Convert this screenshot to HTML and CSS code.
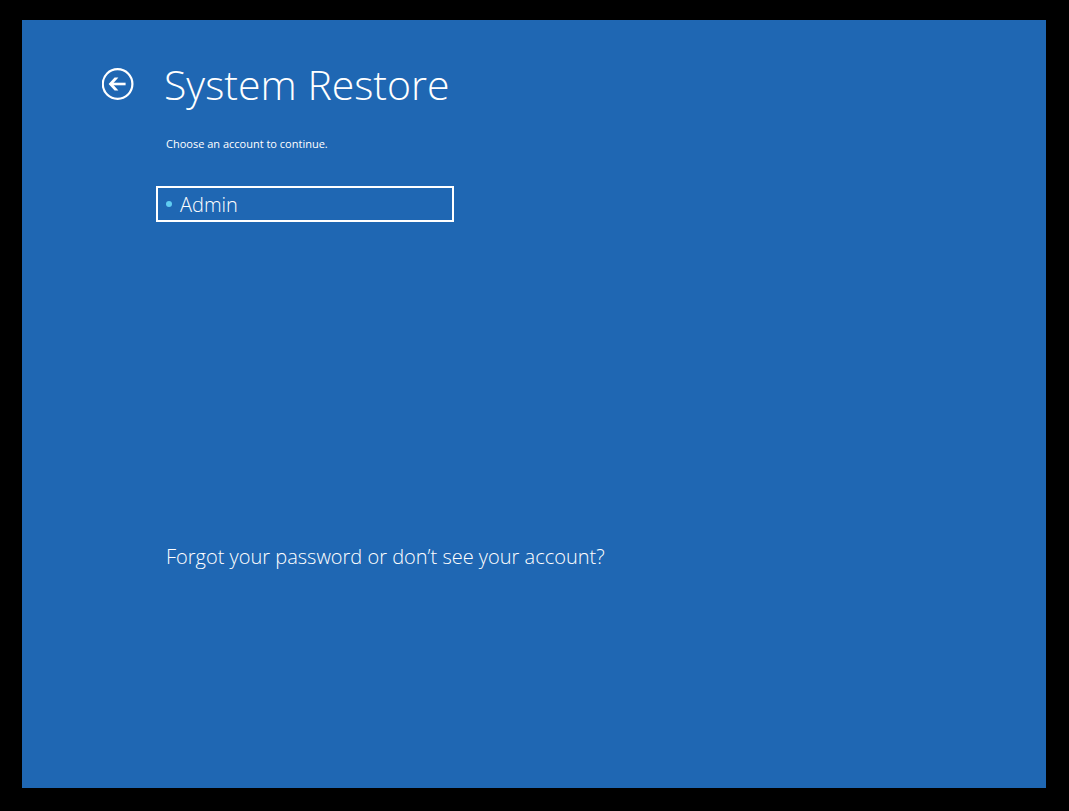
FILE: index.html
```html
<!DOCTYPE html>
<html lang="en">
<head>
    <meta charset="UTF-8">
    <meta name="viewport" content="width=device-width, initial-scale=1.0">
    <title>System Restore</title>
    <link rel="stylesheet" href="styles.css">
</head>
<body>
    <main id="screen">
        <header class="heading">
            <button type="button" class="back" aria-label="Back">
                <svg width="32" height="32" viewBox="0 0 32 32" fill="none" stroke="#fff">
                    <circle cx="15.6" cy="16" r="14.8" stroke-width="2.2"/>
                    <path d="M8.5 16H23.6" stroke-width="2.6"/>
                    <path d="M12.6 9.6H16.4L10.6 16L16.4 22.4H12.6L6.6 16Z" fill="#fff" stroke="none"/>
                </svg>
            </button>
            <h1>System Restore</h1>
        </header>
        <div class="content">
            <p class="hint">Choose an account to continue.</p>
            <div class="accounts">
                <button type="button" class="account"><span class="dot"></span>Admin</button>
            </div>
            <a href="#" class="forgot">Forgot your password or don’t see your account?</a>
        </div>
    </main>
</body>
</html>
```

FILE: styles.css
```css
* {
    margin: 0;
    padding: 0;
    box-sizing: border-box;
}

body {
    min-height: 100vh;
    display: flex;
    padding: 20px 23px 23px 22px;
    background-color: #000;
    color: #fff;
    font-family: "Open Sans", "Noto Sans", sans-serif;
}

#screen {
    flex-grow: 1;
    padding: 34px 80px;
    background-color: #1f67b3;
}

.heading {
    display: flex;
    align-items: center;
    gap: 30px;
}

.heading h1 {
    font-size: 41px;
    font-weight: 300;
    line-height: 60px;
}

.back {
    display: flex;
    border: none;
    background: none;
    cursor: pointer;
}

.content {
    padding-left: 64px;
}

.hint {
    font-size: 11px;
    line-height: 20px;
    margin-top: 20px;
}

.accounts {
    min-height: 325px;
    margin: 32px 0 32px -10px;
}

.account {
    display: flex;
    align-items: center;
    gap: 8px;
    width: 298px;
    height: 36px;
    padding: 0 8px;
    border: 2px solid #fff;
    background: none;
    color: #fff;
    font-family: inherit;
    font-size: 20px;
    font-weight: 300;
    cursor: pointer;
}

.dot {
    width: 6px;
    height: 6px;
    border-radius: 50%;
    background-color: #60cdf2;
}

.forgot {
    color: #fff;
    font-size: 20px;
    font-weight: 300;
    line-height: 28px;
    text-decoration: none;
}
```
